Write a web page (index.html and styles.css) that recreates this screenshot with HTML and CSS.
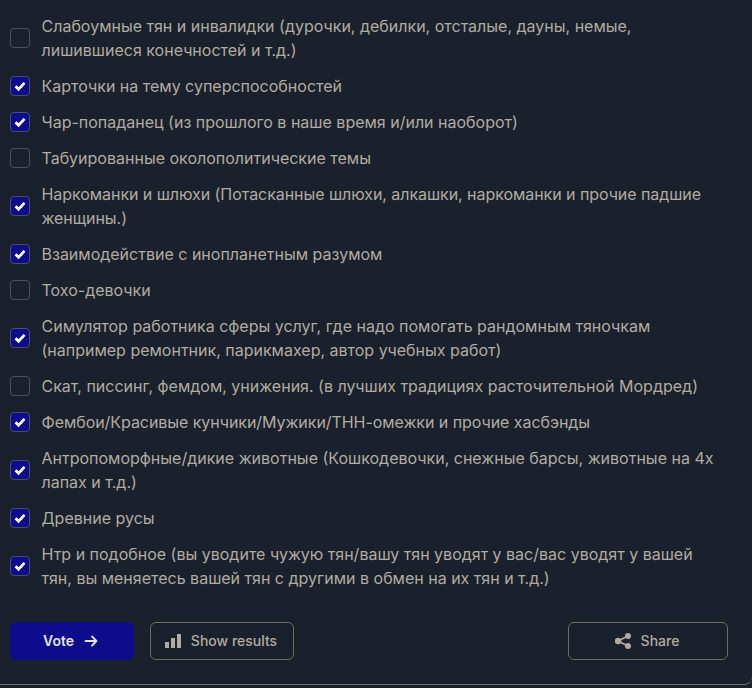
FILE: index.html
```html
<!DOCTYPE html>
<html lang="en">
    <head>
        <meta charset="UTF-8">
        <title>Poll</title>
        <link rel="stylesheet" href="styles.css">
    </head>
    <body>
        <div class="panel">
            <div class="options">
                <label class="option"><input type="checkbox"><span>Слабоумные тян и инвалидки (дурочки, дебилки, отсталые, дауны, немые, лишившиеся конечностей и т.д.)</span></label>
                <label class="option"><input type="checkbox" checked><span>Карточки на тему суперспособностей</span></label>
                <label class="option"><input type="checkbox" checked><span>Чар-попаданец (из прошлого в наше время и/или наоборот)</span></label>
                <label class="option"><input type="checkbox"><span>Табуированные околополитические темы</span></label>
                <label class="option tight"><input type="checkbox" checked><span>Наркоманки и шлюхи (Потасканные шлюхи, алкашки, наркоманки и прочие падшие женщины.)</span></label>
                <label class="option"><input type="checkbox" checked><span>Взаимодействие с инопланетным разумом</span></label>
                <label class="option"><input type="checkbox"><span>Тохо-девочки</span></label>
                <label class="option"><input type="checkbox" checked><span>Симулятор работника сферы услуг, где надо помогать рандомным тяночкам (например ремонтник, парикмахер, автор учебных работ)</span></label>
                <label class="option"><input type="checkbox"><span>Скат, писсинг, фемдом, унижения. (в лучших традициях расточительной Мордред)</span></label>
                <label class="option tight"><input type="checkbox" checked><span>Фембои/Красивые кунчики/Мужики/ТНН-омежки и прочие хасбэнды</span></label>
                <label class="option"><input type="checkbox" checked><span>Антропоморфные/дикие животные (Кошкодевочки, снежные барсы, животные на 4х лапах и т.д.)</span></label>
                <label class="option"><input type="checkbox" checked><span>Древние русы</span></label>
                <label class="option"><input type="checkbox" checked><span>Нтр и подобное (вы уводите чужую тян/вашу тян уводят у вас/вас уводят у вашей тян, вы меняетесь вашей тян с другими в обмен на их тян и т.д.)</span></label>
            </div>
            <div class="actions">
                <button class="btn btn-vote">Vote
                    <svg width="16" height="16" viewBox="0 0 16 16" fill="none" stroke="currentColor" stroke-width="1.8" stroke-linecap="round" stroke-linejoin="round"><path d="M2.5 8h11M9 3.5 13.5 8 9 12.5"/></svg>
                </button>
                <button class="btn btn-results">
                    <svg width="16" height="16" viewBox="0 0 16 16" fill="currentColor"><rect x="0" y="9" width="4" height="6"/><rect x="6" y="5" width="4" height="10"/><rect x="12" y="1" width="4" height="14"/></svg>
                    Show results
                </button>
                <button class="btn btn-share">
                    <svg width="16" height="16" viewBox="0 0 16 16" fill="currentColor" stroke="currentColor"><circle cx="13" cy="3" r="3" stroke="none"/><circle cx="3" cy="8" r="3.2" stroke="none"/><circle cx="13" cy="13" r="3" stroke="none"/><path d="M13 3 3 8l10 5" fill="none" stroke-width="1.8"/></svg>
                    Share
                </button>
            </div>
        </div>
    </body>
</html>
```

FILE: styles.css
```css
* {
    box-sizing: border-box;
}

html, body {
    margin: 0;
    background-color: #1a212c;
}

body {
    font-family: Inter, "Noto Sans", sans-serif;
    font-size: 16px;
    line-height: 24px;
    color: #b2aba0;
}

.panel {
    height: 685px;
    padding: 14px 24px 0 10px;
    border-bottom: 1px solid #7a7062;
    border-bottom-right-radius: 8px;
}

.options {
    display: flex;
    flex-direction: column;
    gap: 12px;
    padding-right: 6px;
}

.option {
    display: flex;
    align-items: center;
    gap: 11.5px;
}

.tight {
    letter-spacing: -0.055px;
}

.option input {
    appearance: none;
    flex: none;
    width: 20px;
    height: 20px;
    margin: 0;
    border: 1px solid #4a4f55;
    border-radius: 4px;
    background-color: #1a212c;
}

.option input:checked {
    border-color: #4a4f6a;
    background-color: #0c0c8c;
    background-image: url("data:image/svg+xml,%3Csvg xmlns='http://www.w3.org/2000/svg' viewBox='0 0 20 20'%3E%3Cpath d='M5 10.3 8.4 13.6 15 6.6' fill='none' stroke='white' stroke-width='3'/%3E%3C/svg%3E");
}

.actions {
    display: flex;
    gap: 16px;
    margin-top: 32px;
}

.btn {
    display: flex;
    align-items: center;
    justify-content: center;
    gap: 10px;
    height: 38px;
    padding: 0 2px 1px 0;
    border: 1px solid #736a5d;
    border-radius: 6px;
    background: transparent;
    color: #b2aba0;
    font-family: inherit;
    font-size: 14px;
    font-weight: 500;
}

.btn svg {
    margin-top: 1px;
}

.btn-vote {
    width: 124px;
    gap: 9px;
    border: 0;
    background-color: #0c0c8c;
    color: #e6e4e0;
    font-weight: 600;
}

.btn-results {
    width: 144px;
}

.btn-share {
    width: 160px;
    margin-left: auto;
}
```
